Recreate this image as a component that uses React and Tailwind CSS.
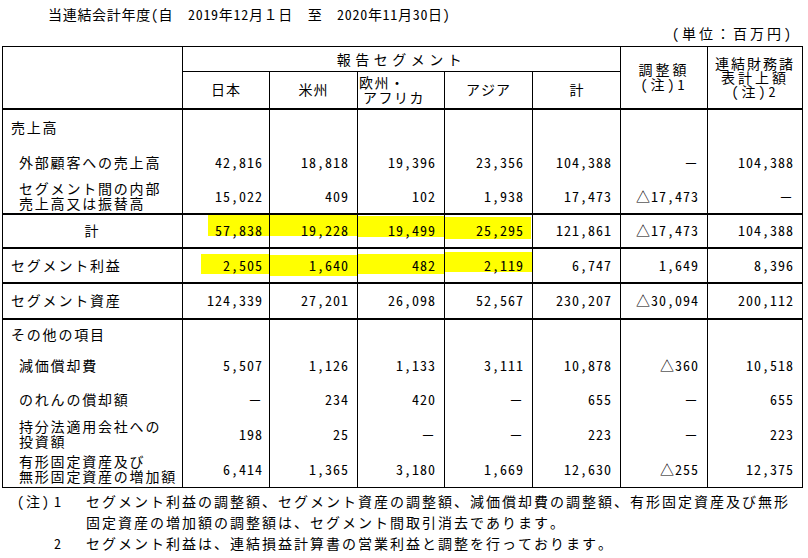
import React from "react";

const cols = [180, 87, 88, 87, 88, 88, 87, 95];

const rows = [
  { label: ["売上高"], indent: 0, h: 36, vals: ["", "", "", "", "", "", ""] },
  { label: ["外部顧客への売上高"], indent: 1, h: 35, vals: ["42,816", "18,818", "19,396", "23,356", "104,388", "－", "104,388"] },
  { label: ["セグメント間の内部", "売上高又は振替高"], indent: 1, h: 34, vals: ["15,022", "409", "102", "1,938", "17,473", "△17,473", "－"], thick: true },
  { label: ["計"], center: true, h: 34, vals: ["57,838", "19,228", "19,499", "25,295", "121,861", "△17,473", "104,388"], thick: true,
    hl: [
      "left-[25px] right-0 top-[0px] h-[21px]",
      "left-0 right-0 top-[0px] h-[21px]",
      "left-0 right-0 top-[1px] h-[21px]",
      "left-0 right-[1px] top-[2px] h-[22px]",
    ] },
  { label: ["セグメント利益"], indent: 0, h: 35, vals: ["2,505", "1,640", "482", "2,119", "6,747", "1,649", "8,396"], thick: true,
    hl: [
      "left-[18px] right-0 top-[5px] h-[20px]",
      "left-0 right-0 top-[6px] h-[21px]",
      "left-0 right-0 top-[5px] h-[20px]",
      "left-0 right-0 top-[3px] h-[20px]",
    ] },
  { label: ["セグメント資産"], indent: 0, h: 36, vals: ["124,339", "27,201", "26,098", "52,567", "230,207", "△30,094", "200,112"], thick: true },
  { label: ["その他の項目"], indent: 0, h: 30, vals: ["", "", "", "", "", "", ""] },
  { label: ["減価償却費"], indent: 1, h: 34, vals: ["5,507", "1,126", "1,133", "3,111", "10,878", "△360", "10,518"] },
  { label: ["のれんの償却額"], indent: 1, h: 34, vals: ["－", "234", "420", "－", "655", "－", "655"] },
  { label: ["持分法適用会社への", "投資額"], indent: 1, h: 35, vals: ["198", "25", "－", "－", "223", "－", "223"] },
  { label: ["有形固定資産及び", "無形固定資産の増加額"], indent: 1, h: 36, vals: ["6,414", "1,365", "3,180", "1,669", "12,630", "△255", "12,375"], last: true },
];

function Label({ row }) {
  if (row.center) {
    return <div className="text-center tracking-[2px]">{row.label[0]}</div>;
  }
  return (
    <div className={(row.indent ? "pl-[16px]" : "pl-[8px]") + " tracking-[1.8px] leading-[15px] whitespace-nowrap"}>
      {row.label.map((l, i) => (
        <div key={i}>{l}</div>
      ))}
    </div>
  );
}

export default function App() {
  return (
    <div className="w-[808px] h-[558px] overflow-hidden bg-white text-black text-[14px] font-['Noto_Sans_Mono_CJK_JP','Noto_Sans_CJK_JP',sans-serif]">
      <div className="h-[24px] pt-[5px] pl-[48px] leading-[18px] tracking-[0.7px] whitespace-nowrap">
        当連結会計年度(自　2019年12月１日　至　2020年11月30日)
      </div>
      <div className="h-[22px] flex justify-end pr-[14px] leading-[18px] tracking-[3px] whitespace-nowrap">
        (単位：百万円)
      </div>
      <table className="ml-[2px] w-[800px] table-fixed border-collapse">
        <colgroup>
          {cols.map((w, i) => (
            <col key={i} style={{ width: w }} />
          ))}
        </colgroup>
        <tbody>
          <tr className="h-[25px]">
            <td rowSpan={2} className="border border-black border-b-2 p-0"></td>
            <td colSpan={5} className="border border-black p-0 text-center tracking-[4.5px] leading-[16px]">
              報告セグメント
            </td>
            <td rowSpan={2} className="border border-black border-b-2 p-0 text-center leading-[15px]">
              <div className="tracking-[3px]">調整額</div>
              <div className="tracking-[3px]">(注)1</div>
            </td>
            <td rowSpan={2} className="border border-black border-b-2 p-0 text-center leading-[14px]">
              <div className="tracking-[2px]">連結財務諸</div>
              <div className="tracking-[3px]">表計上額</div>
              <div className="tracking-[3px]">(注)2</div>
            </td>
          </tr>
          <tr className="h-[37px]">
            <td className="border border-black border-b-2 p-0 text-center tracking-[1px]">日本</td>
            <td className="border border-black border-b-2 p-0 text-center tracking-[1px]">米州</td>
            <td className="border border-black border-b-2 p-0 text-left pl-[1px] leading-[15px] tracking-[1.5px]">
              <div>欧州・</div>
              <div className="pl-[4px]">アフリカ</div>
            </td>
            <td className="border border-black border-b-2 p-0 text-center tracking-[1px]">アジア</td>
            <td className="border border-black border-b-2 p-0 text-center">計</td>
          </tr>
          {rows.map((row, ri) => {
            const bb = row.thick ? "border-b-2" : row.last ? "border-b" : "border-b-0";
            const bt = ri === 0 || ri === 6 ? "" : "border-t-0";
            return (
              <tr key={ri} style={{ height: row.h }}>
                <td className={"border-x border-black p-0 align-middle " + bb + " " + bt}>
                  <Label row={row} />
                </td>
                {row.vals.map((v, ci) => {
                  const hl = row.hl && ci < 4 ? row.hl[ci] : null;
                  return (
                    <td
                      key={ci}
                      className={
                        "relative border-x border-black p-0 align-middle text-right tracking-[1px] " +
                        (ci === 0 ? "pr-[6px] " : "pr-[8px] ") +
                        bb + " " + bt
                      }
                    >
                      {hl && <span className={"absolute bg-[#ffff00] " + hl}></span>}
                      <span className="relative">{v}</span>
                    </td>
                  );
                })}
              </tr>
            );
          })}
        </tbody>
      </table>
      <div className="pt-[2px] text-[14px] tracking-[2px] leading-[22px] whitespace-nowrap">
        <div className="flex">
          <span className="w-[54px] pl-[17px]">(注)</span>
          <span className="w-[32px]">1</span>
          <span>セグメント利益の調整額、セグメント資産の調整額、減価償却費の調整額、有形固定資産及び無形</span>
        </div>
        <div className="flex leading-[21px]">
          <span className="w-[86px]"></span>
          <span>固定資産の増加額の調整額は、セグメント間取引消去であります。</span>
        </div>
        <div className="flex leading-[21px]">
          <span className="w-[54px]"></span>
          <span className="w-[32px]">2</span>
          <span>セグメント利益は、連結損益計算書の営業利益と調整を行っております。</span>
        </div>
      </div>
    </div>
  );
}
